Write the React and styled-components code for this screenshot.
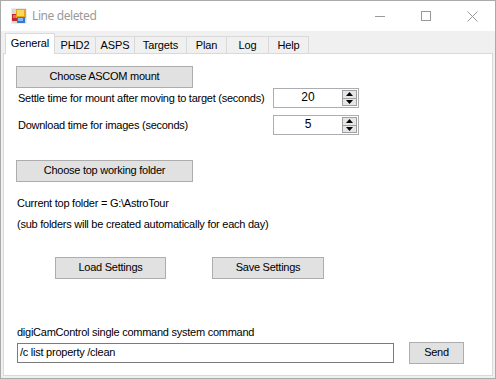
import React from "react";
import styled, { createGlobalStyle } from "styled-components";

const Global = createGlobalStyle`
  html, body { margin: 0; padding: 0; background: #fff; }
  * { box-sizing: border-box; }
`;

const Window = styled.div`
  width: 496px;
  height: 379px;
  border: 1px solid #aaaaaa;
  display: flex;
  flex-direction: column;
  background: #f0f0f0;
  font-family: "Liberation Sans", Arial, sans-serif;
  font-size: 11px;
  letter-spacing: -0.25px;
  color: #000;
`;

const TitleBar = styled.div`
  height: 30px;
  background: #fff;
  display: flex;
  align-items: center;
  flex-shrink: 0;
`;

const AppIcon = styled.div`
  width: 16px;
  height: 16px;
  margin-left: 10px;
  display: flex;
`;

const Title = styled.div`
  margin-left: 5px;
  font-family: "Noto Sans", "Open Sans", sans-serif;
  font-size: 12px;
  letter-spacing: -0.4px;
  color: #9a9a9a;
  flex: 1;
  padding-bottom: 1px;
`;

const CaptionButton = styled.div`
  width: 46px;
  height: 30px;
  display: flex;
  align-items: center;
  justify-content: center;
  flex-shrink: 0;
`;

const Client = styled.div`
  flex: 1;
  padding: 2px;
  display: flex;
  flex-direction: column;
`;

const TabStrip = styled.div`
  display: flex;
  align-items: flex-end;
  height: 21px;
  padding-left: 2px;
  margin-bottom: -1px;
  position: relative;
  z-index: 1;
`;

const Tab = styled.div`
  width: ${(p) => p.$w}px;
  height: ${(p) => (p.$active ? 21 : 18)}px;
  margin-left: ${(p) => (p.$first ? 0 : -1)}px;
  border: 1px solid #d9d9d9;
  border-bottom: ${(p) => (p.$active ? "none" : "1px solid #d9d9d9")};
  background: ${(p) => (p.$active ? "#fff" : "#f0f0f0")};
  display: flex;
  justify-content: center;
  padding-top: ${(p) => (p.$active ? 3 : 2)}px;
  font-size: 11px;
  letter-spacing: -0.1px;
  line-height: 13px;
  position: relative;
  z-index: ${(p) => (p.$active ? 2 : 1)};
`;

const Panel = styled.div`
  flex: 1;
  background: #fff;
  border: 1px solid #d9d9d9;
  display: flex;
  flex-direction: column;
  padding: 12px 0 0 12px;
`;

const Button = styled.div`
  width: ${(p) => p.$w}px;
  height: 22px;
  background: #e1e1e1;
  border: 1px solid #adadad;
  display: flex;
  align-items: center;
  justify-content: center;
  flex-shrink: 0;
  margin-top: ${(p) => p.$mt || 0}px;
  margin-left: ${(p) => p.$ml || 0}px;
  line-height: 13px;
  padding-bottom: 1px;
`;

const Row = styled.div`
  display: flex;
  align-items: center;
  height: ${(p) => p.$h || 20}px;
  margin-top: ${(p) => p.$mt || 0}px;
`;

const FieldLabel = styled.div`
  width: 257px;
  padding-left: 2px;
  line-height: 13px;
`;

const Text = styled.div`
  line-height: 13px;
  margin-top: ${(p) => p.$mt || 0}px;
  padding-left: ${(p) => p.$pl || 0}px;
`;

const Spinner = styled.div`
  width: 86px;
  height: 20px;
  border: 1px solid #abadb3;
  display: flex;
  background: #fff;
`;

const SpinValue = styled.div`
  flex: 1;
  text-align: center;
  line-height: 17px;
  font-size: 12px;
  letter-spacing: 0;
`;

const SpinButtons = styled.div`
  width: 15px;
  display: flex;
  flex-direction: column;
  margin: 1px 1px 1px 0;
`;

const SpinBtn = styled.div`
  flex: 1;
  background: #e6e6e6;
  border: 1px solid #a0a0a0;
  display: flex;
  align-items: center;
  justify-content: center;
  & + & { border-top: none; }
`;

const TextBox = styled.div`
  width: 377px;
  height: 20px;
  border: 1px solid #7a7a7a;
  background: #fff;
  margin-left: 1px;
  padding-left: 2px;
  line-height: 17px;
`;

const ButtonRow = styled.div`
  display: flex;
  margin-top: ${(p) => p.$mt || 0}px;
`;

const Up = () => (
  <svg width="7" height="4" viewBox="0 0 7 4"><path d="M0 4 L3.5 0 L7 4 Z" fill="#000" /></svg>
);
const Down = () => (
  <svg width="7" height="4" viewBox="0 0 7 4"><path d="M0 0 L3.5 4 L7 0 Z" fill="#000" /></svg>
);

const NumberSpinner = ({ value }) => (
  <Spinner>
    <SpinValue>{value}</SpinValue>
    <SpinButtons>
      <SpinBtn><Up /></SpinBtn>
      <SpinBtn><Down /></SpinBtn>
    </SpinButtons>
  </Spinner>
);

const tabs = [
  ["General", 50],
  ["PHD2", 42],
  ["ASPS", 40],
  ["Targets", 53],
  ["Plan", 41],
  ["Log", 43],
  ["Help", 41],
];

export default function App() {
  return (
    <>
      <Global />
      <Window>
        <TitleBar>
          <AppIcon>
            <svg width="16" height="16" viewBox="0 0 16 16">
              <rect x="0.5" y="0.5" width="15" height="15" fill="#d8d8d8" />
              <rect x="1" y="6" width="6" height="7" fill="#c0282a" />
              <rect x="2" y="7" width="3" height="3" fill="#e86a60" />
              <rect x="5" y="1" width="10" height="9" fill="#e8a810" />
              <rect x="6" y="2" width="7" height="6" fill="#f8d860" />
              <rect x="6" y="9" width="8" height="6" fill="#3a78d0" />
              <rect x="7" y="10" width="5" height="3" fill="#8ab8f0" />
            </svg>
          </AppIcon>
          <Title>Line deleted</Title>
          <CaptionButton>
            <svg width="10" height="10" viewBox="0 0 10 10"><path d="M0 5.5 H10" stroke="#999" strokeWidth="1" /></svg>
          </CaptionButton>
          <CaptionButton>
            <svg width="10" height="10" viewBox="0 0 10 10"><rect x="0.5" y="0.5" width="9" height="9" fill="none" stroke="#999" strokeWidth="1" /></svg>
          </CaptionButton>
          <CaptionButton>
            <svg width="11" height="11" viewBox="0 0 11 11"><path d="M0.5 0.5 L10.5 10.5 M10.5 0.5 L0.5 10.5" stroke="#999" strokeWidth="1" /></svg>
          </CaptionButton>
        </TitleBar>
        <Client>
          <TabStrip>
            {tabs.map(([t, w], i) => (
              <Tab key={t} $w={w} $active={i === 0} $first={i === 0}>{t}</Tab>
            ))}
          </TabStrip>
          <Panel>
            <Button $w={177}>Choose ASCOM mount</Button>
            <Row>
              <FieldLabel>Settle time for mount after moving to target (seconds)</FieldLabel>
              <NumberSpinner value="20" />
            </Row>
            <Row $mt={7}>
              <FieldLabel>Download time for images (seconds)</FieldLabel>
              <NumberSpinner value="5" />
            </Row>
            <Button $w={177} $mt={25}>Choose top working folder</Button>
            <Text $mt={15} $pl={1}>Current top folder = G:\AstroTour</Text>
            <Text $mt={8} $pl={1}>(sub folders will be created automatically for each day)</Text>
            <ButtonRow $mt={26}>
              <Button $w={111} $ml={39}>Load Settings</Button>
              <Button $w={112} $ml={46}>Save Settings</Button>
            </ButtonRow>
            <Text $mt={47} $pl={1}>digiCamControl single command system command</Text>
            <Row $h={22} $mt={3}>
              <TextBox>/c list property /clean</TextBox>
              <Button $w={55} $ml={15}>Send</Button>
            </Row>
          </Panel>
        </Client>
      </Window>
    </>
  );
}
